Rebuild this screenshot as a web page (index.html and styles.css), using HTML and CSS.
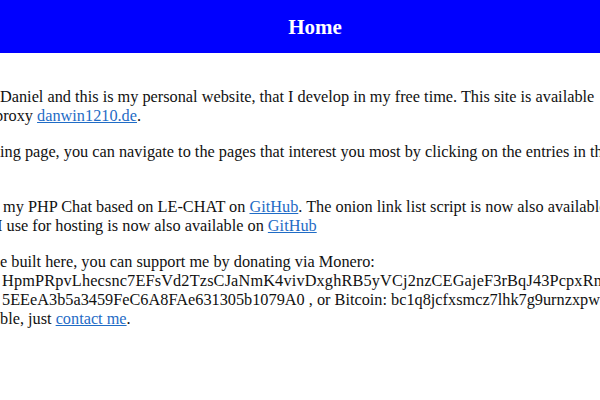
FILE: index.html
```html
<!DOCTYPE html>
<html lang="en">
<head>
<meta charset="utf-8">
<title>Home</title>
<link rel="stylesheet" href="styles.css">
</head>
<body>
<header class="top">
  <h1 class="title">Home</h1>
</header>
<main class="content">
  <p class="para">
    <span class="line">Daniel and this is my personal website, that I develop in my free time. This site is available</span>
    <span class="line cut-p">proxy <a href="#">danwin1210.de</a>.</span>
  </p>
  <p class="para para-tall">
    <span class="line">ing page, you can navigate to the pages that interest you most by clicking on the entries in the</span>
  </p>
  <p class="para">
    <span class="line shift">my PHP Chat based on LE-CHAT on <a href="#">GitHub</a>. The onion link list script is now also available</span>
    <span class="line cut-i">I use for hosting is now also available on <a href="#">GitHub</a></span>
  </p>
  <p class="para">
    <span class="line">e built here, you can support me by donating via Monero:</span>
    <span class="line inset address">HpmPRpvLhecsnc7EFsVd2TzsCJaNmK4vivDxghRB5yVCj2nzCEGajeF3rBqJ43PcpxRm</span>
    <span class="line inset">5EEeA3b5a3459FeC6A8FAe631305b1079A0 , or Bitcoin: bc1q8jcfxsmcz7lhk7g9urnzxpw</span>
    <span class="line">ble, just <a href="#">contact me</a>.</span>
  </p>
</main>
</body>
</html>
```

FILE: styles.css
```css
html, body {
  margin: 0;
  padding: 0;
  background: #ffffff;
  overflow: hidden;
}

body {
  width: 600px;
  height: 400px;
  font-family: "Liberation Serif", "DejaVu Serif", serif;
  font-size: 16.3px;
  line-height: 19px;
  color: #111111;
}

.top {
  background: #0000ff;
  height: 53px;
  display: flex;
  align-items: center;
  justify-content: center;
  padding-left: 30px;
}

.title {
  margin: 0;
  color: #ffffff;
  font-size: 21px;
  font-weight: bold;
  line-height: 24px;
}

.content {
  padding-top: 17px;
  overflow: hidden;
}

.para {
  margin: 17px 0;
}

.para-tall {
  margin-bottom: 36px;
}

.line {
  display: block;
  white-space: nowrap;
}

.shift {
  margin-left: 3px;
}

.cut-p {
  margin-left: -5px;
}

.cut-i {
  margin-left: -3px;
}

.inset {
  margin-left: 2px;
}

.address {
  letter-spacing: 0.15px;
}

a {
  color: #1f6cc6;
  text-decoration: underline;
}
```
